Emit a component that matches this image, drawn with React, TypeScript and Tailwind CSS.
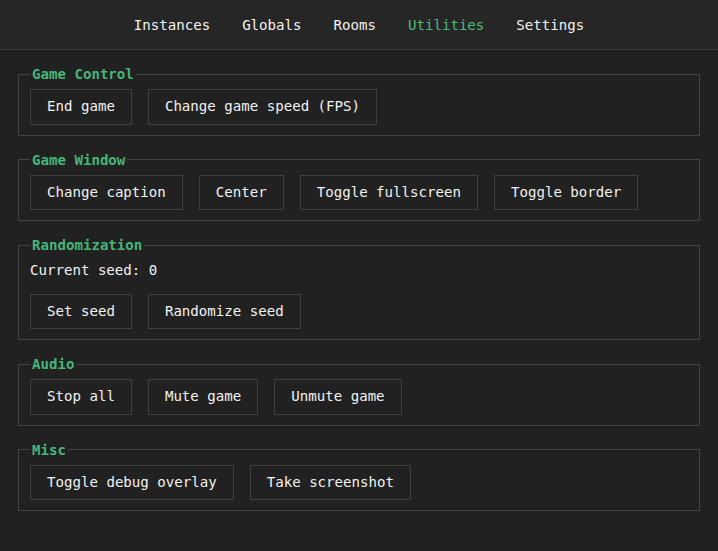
const tabs = ['Instances', 'Globals', 'Rooms', 'Utilities', 'Settings'];

const sections = [
  { title: 'Game Control', buttons: ['End game', 'Change game speed (FPS)'] },
  { title: 'Game Window', buttons: ['Change caption', 'Center', 'Toggle fullscreen', 'Toggle border'] },
  { title: 'Randomization', note: 'Current seed: 0', buttons: ['Set seed', 'Randomize seed'] },
  { title: 'Audio', buttons: ['Stop all', 'Mute game', 'Unmute game'] },
  { title: 'Misc', buttons: ['Toggle debug overlay', 'Take screenshot'] },
];

const Section = ({ title, note, buttons }: { title: string; note?: string; buttons: string[] }) => (
  <fieldset className="border border-[#434343] px-[11px] pt-[7px] pb-[10px]">
    <legend className="px-[2px] text-[#46b57a] font-bold leading-4">{title}</legend>
    {note && <div className="leading-5 mb-[13.5px] text-[#f2f2f2]">{note}</div>}
    <div className="flex gap-4">
      {buttons.map((b) => (
        <button
          key={b}
          className="border border-[#3f3f3f] bg-transparent px-4 py-2 leading-[17.5px] text-[#f2f2f2]"
        >
          {b}
        </button>
      ))}
    </div>
  </fieldset>
);

export default function App() {
  return (
    <div
      className="w-[718px] h-[551px] bg-[#212121] text-[14.1px] text-[#f2f2f2]"
      style={{ fontFamily: '"DejaVu Sans Mono", "Liberation Mono", monospace' }}
    >
      <nav className="h-[50px] pt-[3px] bg-[#262626] border-b border-[#3a3a3a] flex items-center justify-center gap-8">
        {tabs.map((t) => (
          <span key={t} className={t === 'Utilities' ? 'text-[#4cb87e]' : 'text-[#f2f2f2]'}>
            {t}
          </span>
        ))}
      </nav>
      <div className="px-[18px] pt-4 flex flex-col gap-4">
        {sections.map((s) => (
          <Section key={s.title} {...s} />
        ))}
      </div>
    </div>
  );
}
